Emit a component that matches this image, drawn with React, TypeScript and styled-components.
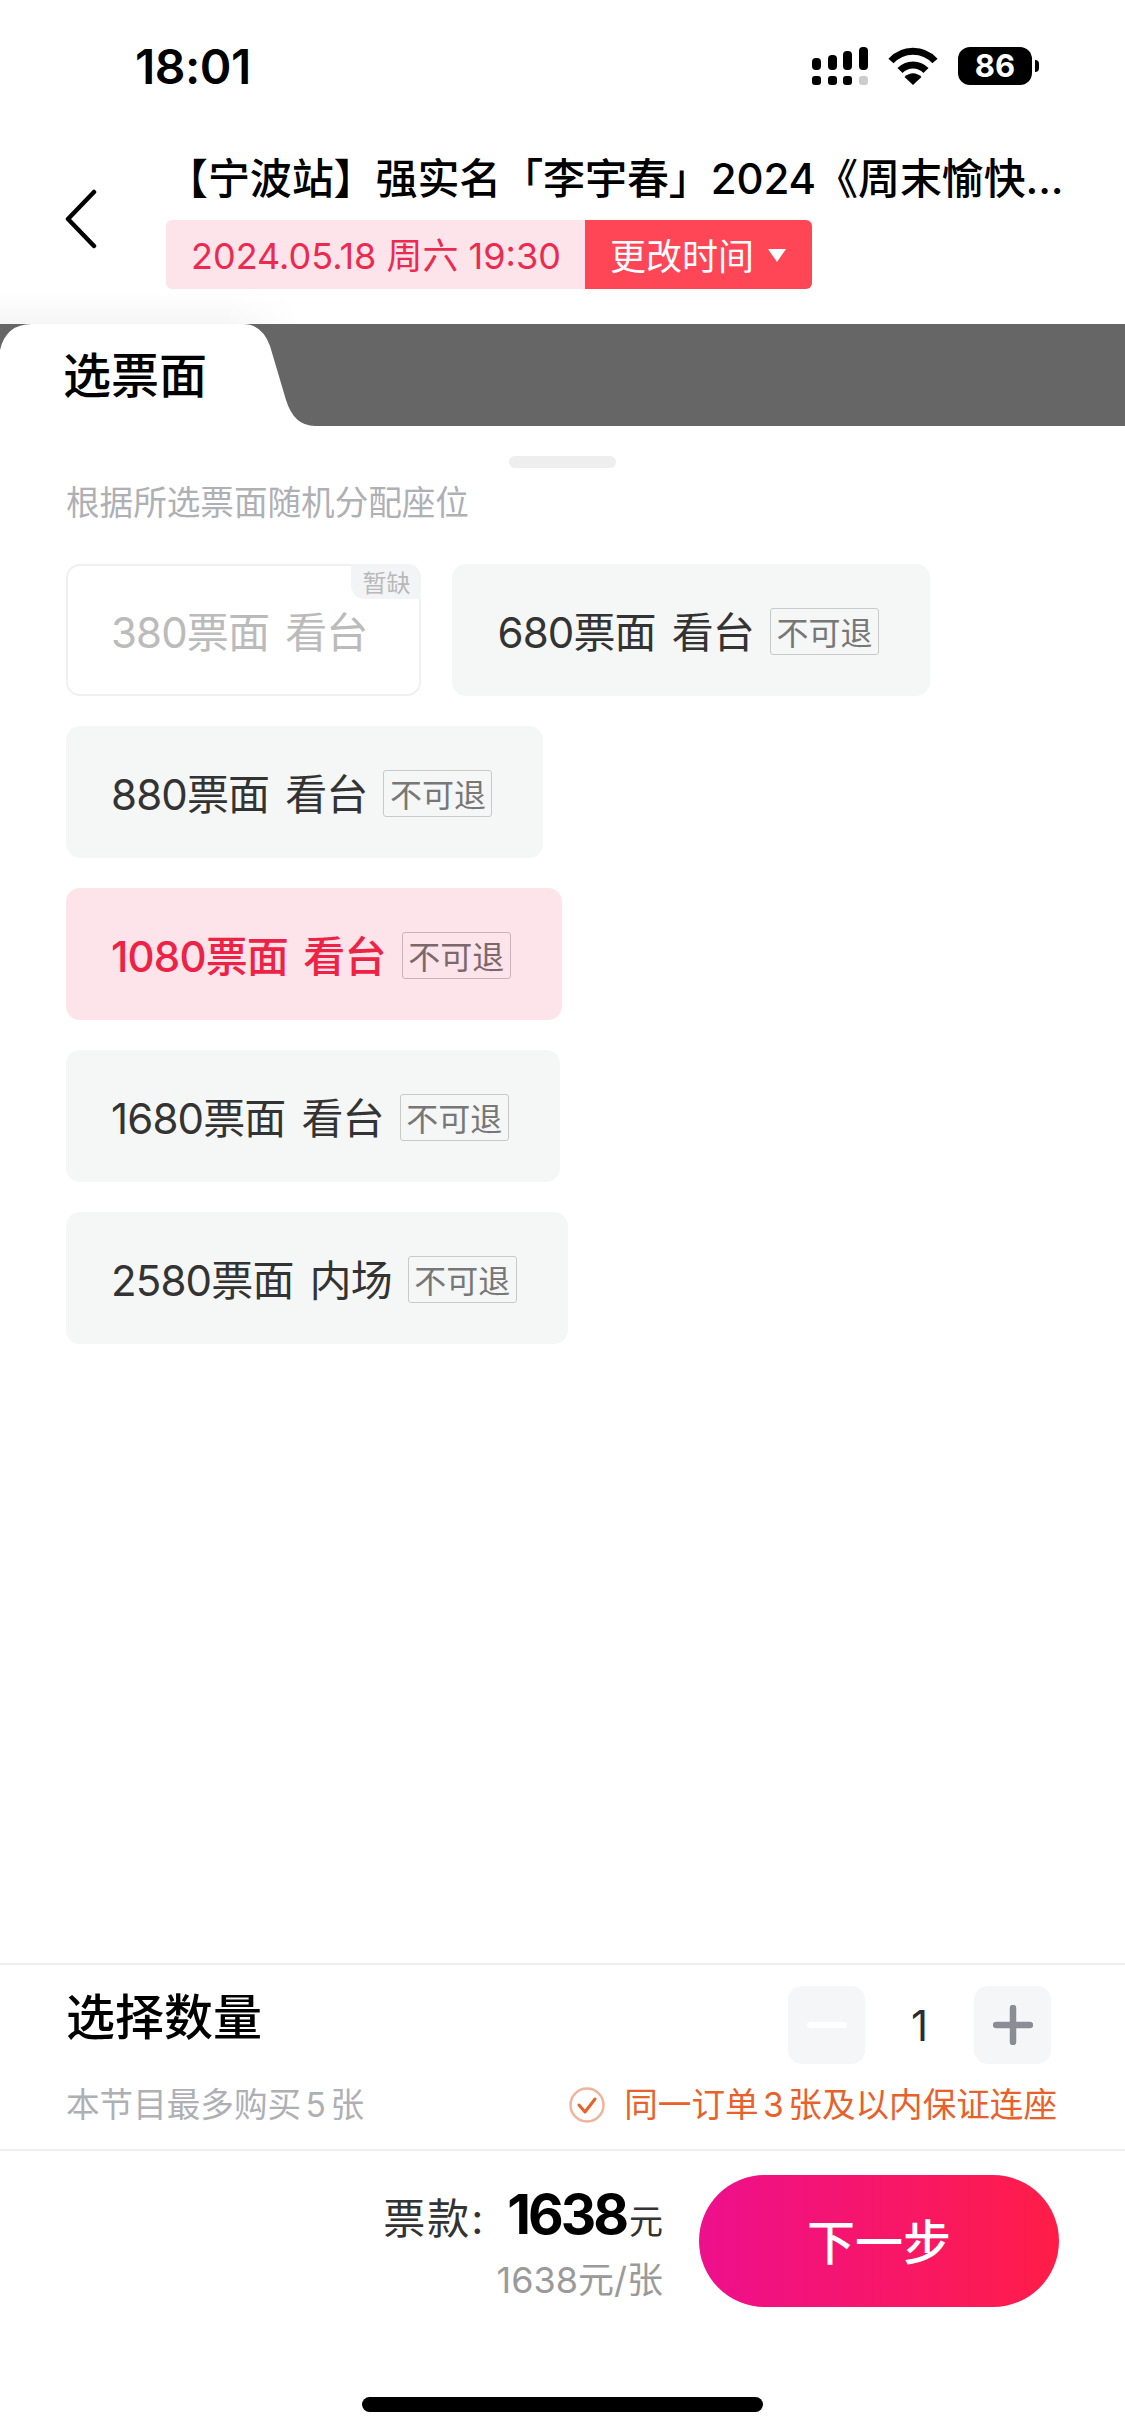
import React from 'react';
import styled, { createGlobalStyle } from 'styled-components';

const GlobalStyle = createGlobalStyle`
  html, body {
    margin: 0;
    padding: 0;
    background: #fff;
    font-family: Inter, "Noto Sans CJK SC", sans-serif;
  }
`;

const Page = styled.div`
  width: 1125px;
  height: 2436px;
  display: flex;
  flex-direction: column;
  background: #fff;
  overflow: hidden;
`;

const StatusBar = styled.div`
  height: 132px;
  padding: 0 86px 0 135px;
  display: flex;
  align-items: center;
  justify-content: space-between;
  flex-shrink: 0;
`;

const Clock = styled.div`
  font-size: 48px;
  font-weight: 600;
  color: #000;
  letter-spacing: -0.5px;
`;

const StatusIcons = styled.div`
  display: flex;
  align-items: center;
  gap: 20px;
`;

const Battery = styled.div`
  position: relative;
  width: 74px;
  height: 38px;
  margin-right: 7px;
  border-radius: 12px;
  background: #000;
  color: #fff;
  font-size: 31px;
  font-weight: 700;
  line-height: 38px;
  text-align: center;

  &::after {
    content: '';
    position: absolute;
    right: -7px;
    top: 13px;
    width: 4px;
    height: 12px;
    border-radius: 0 6px 6px 0;
    background: #000;
  }
`;

const Header = styled.div`
  height: 192px;
  padding: 22px 0 0 60px;
  box-sizing: border-box;
  display: flex;
  align-items: flex-start;
  flex-shrink: 0;
`;

const BackIcon = styled.svg`
  width: 40px;
  height: 60px;
  margin: 35px 66px 0 0;
  flex-shrink: 0;
`;

const HeaderInfo = styled.div`
  display: flex;
  flex-direction: column;
  align-items: flex-start;
  gap: 16px;
`;

const ShowTitle = styled.div`
  font-size: 42px;
  line-height: 50px;
  font-weight: 500;
  color: #000;
  letter-spacing: -0.1px;
  white-space: nowrap;
`;

const DateBar = styled.div`
  display: flex;
  height: 69px;
  border-radius: 6px;
  overflow: hidden;
`;

const DateText = styled.div`
  width: 419px;
  padding: 0 0 3px 25px;
  box-sizing: border-box;
  display: flex;
  align-items: center;
  background: #fce4ea;
  color: #ec2a50;
  font-size: 36px;
  white-space: nowrap;
`;

const ChangeTime = styled.div`
  width: 227px;
  padding: 0 0 2px 25px;
  box-sizing: border-box;
  display: flex;
  align-items: center;
  gap: 14px;
  background: #ff4657;
  color: #fff;
  font-size: 36px;
  white-space: nowrap;

  &::after {
    content: '';
    margin-top: 3px;
    border-left: 9px solid transparent;
    border-right: 9px solid transparent;
    border-top: 13px solid #fff;
  }
`;

const TabBand = styled.div`
  position: relative;
  height: 102px;
  background: #666;
  flex-shrink: 0;

  &::before {
    content: '';
    position: absolute;
    left: 0;
    top: -32px;
    width: 300px;
    height: 32px;
    background: linear-gradient(to bottom, #fff, #f6f6f6);
    -webkit-mask-image: linear-gradient(to right, #000 75%, transparent);
    mask-image: linear-gradient(to right, #000 75%, transparent);
  }
`;

const ActiveTab = styled.div`
  width: 315px;
  height: 102px;
  padding: 0 0 0 63px;
  box-sizing: border-box;
  background: #fff;
  clip-path: path('M0 26 Q6 0 32 0 H243 Q262 0 270 22 L286 76 Q294 102 315 102 H0 Z');
  color: #000;
  font-size: 48px;
  font-weight: 500;
  line-height: 104px;
`;

const Sheet = styled.div`
  flex: 1;
  display: flex;
  flex-direction: column;
  padding: 30px 66px 0;
  min-height: 0;
`;

const Handle = styled.div`
  align-self: center;
  width: 107px;
  height: 12px;
  border-radius: 6px;
  background: #eee;
`;

const Hint = styled.div`
  margin-top: 13px;
  font-size: 33.6px;
  line-height: 44px;
  color: #aeb0b5;
`;

const TicketList = styled.div`
  margin-top: 39px;
  display: flex;
  flex-wrap: wrap;
  gap: 30px 31px;
`;

type TicketState = 'normal' | 'selected' | 'soldout';

const TicketCard = styled.div<{ $state: TicketState }>`
  position: relative;
  height: 132px;
  padding: 0 ${p => (p.$state === 'soldout' ? '52px' : '51px')} 2px ${p => (p.$state === 'soldout' ? '43px' : '45px')};
  box-sizing: border-box;
  display: flex;
  align-items: center;
  gap: 16px;
  border-radius: 14px;
  font-size: 42px;
  letter-spacing: -0.85px;
  word-spacing: 5px;
  white-space: nowrap;
  background: ${p => (p.$state === 'selected' ? '#fce4ea' : p.$state === 'soldout' ? '#fff' : '#f5f6f6')};
  color: ${p => (p.$state === 'selected' ? '#ee2244' : p.$state === 'soldout' ? '#bbb' : '#333')};
  font-weight: ${p => (p.$state === 'selected' ? 500 : 400)};
  border: ${p => (p.$state === 'soldout' ? '2px solid #f0f0f0' : 'none')};
`;

const RefundTag = styled.span<{ $selected?: boolean }>`
  width: 109px;
  height: 47px;
  margin-top: 4px;
  box-sizing: border-box;
  display: flex;
  align-items: center;
  justify-content: center;
  border: 1.5px solid ${p => (p.$selected ? '#c9b2b9' : '#c9c9c9')};
  border-radius: 3px;
  color: ${p => (p.$selected ? '#7a686d' : '#777')};
  font-size: 32px;
  font-weight: 400;
  letter-spacing: 0;
  word-spacing: 0;
`;

const SoldOutBadge = styled.span`
  position: absolute;
  top: -2px;
  right: -2px;
  width: 70px;
  height: 35px;
  display: flex;
  align-items: center;
  justify-content: center;
  border-radius: 0 14px 0 14px;
  background: #f3f4f5;
  color: #b9b9b9;
  font-size: 24px;
  font-weight: 400;
  letter-spacing: 0;
`;

const QuantitySection = styled.div`
  height: 163px;
  padding: 21px 68px 0 66px;
  display: flex;
  flex-direction: column;
  border-top: 2px solid #eee;
  border-bottom: 2px solid #eee;
  flex-shrink: 0;
`;

const QuantityRow = styled.div`
  display: flex;
  align-items: center;
  justify-content: space-between;
`;

const QuantityTitle = styled.div`
  padding-bottom: 14px;
  font-size: 49px;
  line-height: 60px;
  font-weight: 500;
  color: #000;
`;

const Stepper = styled.div`
  display: flex;
  align-items: center;
  margin-right: 6px;
`;

const StepButton = styled.div`
  width: 77px;
  height: 78px;
  display: flex;
  align-items: center;
  justify-content: center;
  border-radius: 14px;
  background: #f5f6f7;
`;

const StepIcon = styled.svg`
  width: 40px;
  height: 40px;
`;

const Count = styled.div`
  width: 109px;
  text-align: center;
  font-size: 42px;
  color: #2a2c33;
`;

const NoteRow = styled.div`
  margin-top: 19px;
  display: flex;
  align-items: center;
  justify-content: space-between;
  font-size: 33.6px;
  line-height: 44px;
`;

const LimitNote = styled.div`
  color: #aeb0b5;
`;

const SeatNote = styled.div`
  display: flex;
  align-items: center;
  gap: 19px;
  color: #e8602a;
`;

const NoteNumber = styled.span`
  margin: 0 4.5px;
`;

const CheckIcon = styled.svg`
  width: 36px;
  height: 36px;
`;

const Checkout = styled.div`
  padding: 24px 66px 0 0;
  display: flex;
  justify-content: flex-end;
  gap: 36px;
  flex-shrink: 0;
`;

const PriceInfo = styled.div`
  padding-top: 8px;
  display: flex;
  flex-direction: column;
  align-items: flex-end;
`;

const PriceLine = styled.div`
  display: flex;
  align-items: baseline;
  line-height: 62px;
  color: #333;
  font-size: 34px;
`;

const PriceLabel = styled.span`
  font-size: 42px;
  letter-spacing: 2px;
  margin-right: 22px;
`;

const PriceValue = styled.span`
  font-size: 55px;
  font-weight: 700;
  color: #000;
  margin-right: 3px;
  letter-spacing: -3px;
`;

const UnitPrice = styled.div`
  margin-top: 5px;
  font-size: 36px;
  line-height: 44px;
  color: #9a9a9a;
`;

const NextButton = styled.div`
  width: 360px;
  height: 132px;
  padding-bottom: 4px;
  box-sizing: border-box;
  border-radius: 66px;
  display: flex;
  align-items: center;
  justify-content: center;
  background: linear-gradient(to right, #ee0f8d, #ff1d47);
  color: #fff;
  font-size: 48px;
  font-weight: 500;
`;

const HomeArea = styled.div`
  padding: 90px 0 24px;
  display: flex;
  justify-content: center;
  flex-shrink: 0;
`;

const HomeIndicator = styled.div`
  width: 401px;
  height: 15px;
  border-radius: 8px;
  background: #000;
`;

const SignalIcon = () => (
  <svg width="56" height="38" viewBox="0 0 56 38">
    <rect x="0" y="11" width="9" height="12" rx="4" />
    <rect x="16" y="8" width="9" height="15" rx="4" />
    <rect x="31" y="4" width="9" height="19" rx="4" />
    <rect x="47" y="0" width="9" height="23" rx="4" />
    <rect x="0" y="29" width="9" height="9" rx="3" />
    <rect x="16" y="29" width="9" height="9" rx="3" />
    <rect x="31" y="29" width="9" height="9" rx="3" />
    <rect x="47" y="29" width="9" height="9" rx="3" fill="#ccc" />
  </svg>
);

const WifiIcon = () => (
  <svg width="50" height="38" viewBox="0 0 50 38" fill="none" stroke="#000" strokeWidth="7">
    <path d="M3 14 C15 1 35 1 47 14" />
    <path d="M12 23.5 C19 16 31 16 38 23.5" />
    <path d="M16.5 30 C22 25 28 25 33.5 30 L25 38 Z" fill="#000" stroke="none" />
  </svg>
);

const tickets: { name: string; state: TicketState; refund: boolean }[] = [
  { name: '380票面 看台', state: 'soldout', refund: false },
  { name: '680票面 看台', state: 'normal', refund: true },
  { name: '880票面 看台', state: 'normal', refund: true },
  { name: '1080票面 看台', state: 'selected', refund: true },
  { name: '1680票面 看台', state: 'normal', refund: true },
  { name: '2580票面 内场', state: 'normal', refund: true },
];

const App = () => (
  <Page>
    <GlobalStyle />
    <StatusBar>
      <Clock>18:01</Clock>
      <StatusIcons>
        <SignalIcon />
        <WifiIcon />
        <Battery>86</Battery>
      </StatusIcons>
    </StatusBar>

    <Header>
      <BackIcon viewBox="0 0 40 60" fill="none">
        <path d="M34 3 L8 30 L34 57" stroke="#000" strokeWidth="4.5" strokeLinecap="round" strokeLinejoin="round" />
      </BackIcon>
      <HeaderInfo>
        <ShowTitle>【宁波站】强实名「李宇春」2024《周末愉快...</ShowTitle>
        <DateBar>
          <DateText>2024.05.18 周六 19:30</DateText>
          <ChangeTime>更改时间</ChangeTime>
        </DateBar>
      </HeaderInfo>
    </Header>

    <TabBand>
      <ActiveTab>选票面</ActiveTab>
    </TabBand>

    <Sheet>
      <Handle />
      <Hint>根据所选票面随机分配座位</Hint>
      <TicketList>
        {tickets.map(t => (
          <TicketCard key={t.name} $state={t.state}>
            {t.name}
            {t.refund && <RefundTag $selected={t.state === 'selected'}>不可退</RefundTag>}
            {t.state === 'soldout' && <SoldOutBadge>暂缺</SoldOutBadge>}
          </TicketCard>
        ))}
      </TicketList>
    </Sheet>

    <QuantitySection>
      <QuantityRow>
        <QuantityTitle>选择数量</QuantityTitle>
        <Stepper>
          <StepButton>
            <StepIcon viewBox="0 0 40 40">
              <path d="M3 20 H37" stroke="#fff" strokeWidth="6" strokeLinecap="round" />
            </StepIcon>
          </StepButton>
          <Count>1</Count>
          <StepButton>
            <StepIcon viewBox="0 0 40 40">
              <path d="M3 20 H37 M20 3 V37" stroke="#8b8d96" strokeWidth="6.5" strokeLinecap="round" />
            </StepIcon>
          </StepButton>
        </Stepper>
      </QuantityRow>
      <NoteRow>
        <LimitNote>本节目最多购买<NoteNumber>5</NoteNumber>张</LimitNote>
        <SeatNote>
          <CheckIcon viewBox="0 0 36 36" fill="none">
            <circle cx="18" cy="18" r="16.5" stroke="#eeb49c" strokeWidth="2.5" />
            <path d="M10 18 L16 25 L26 12" stroke="#e8602a" strokeWidth="3" strokeLinecap="round" strokeLinejoin="round" />
          </CheckIcon>
          <span>同一订单<NoteNumber>3</NoteNumber>张及以内保证连座</span>
        </SeatNote>
      </NoteRow>
    </QuantitySection>

    <Checkout>
      <PriceInfo>
        <PriceLine>
          <PriceLabel>票款:</PriceLabel>
          <PriceValue>1638</PriceValue>元
        </PriceLine>
        <UnitPrice>1638元/张</UnitPrice>
      </PriceInfo>
      <NextButton>下一步</NextButton>
    </Checkout>

    <HomeArea>
      <HomeIndicator />
    </HomeArea>
  </Page>
);

export default App;
